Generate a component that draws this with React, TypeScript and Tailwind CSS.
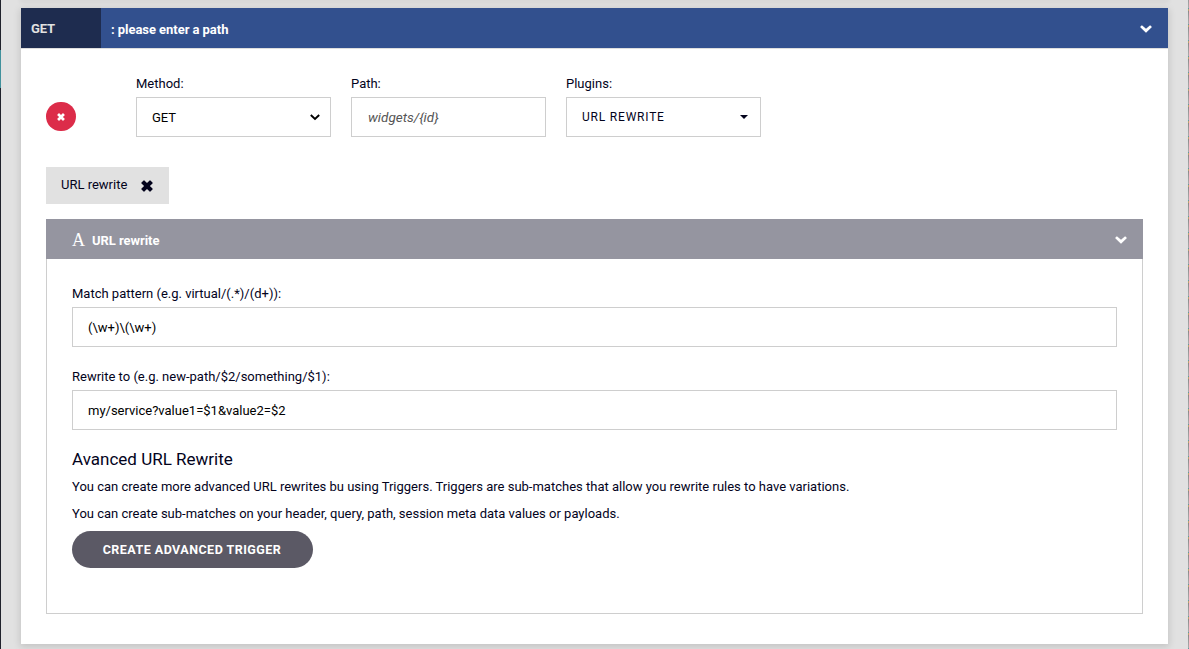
import type { ReactNode } from "react";

function Chevron({ className, width }: { className?: string; width: number }) {
  return (
    <svg className={className} width={width} height={(width * 8) / 12} viewBox="0 0 12 8" fill="currentColor" aria-hidden="true">
      <path d="M2.2 .4 6 3.8 9.8 .4Q10.1 .1 10.4 .4L11.7 1.7Q12 2 11.7 2.3L6.3 7.6Q6 7.9 5.7 7.6L.3 2.3Q0 2 .3 1.7L1.6 .4Q1.9 .1 2.2 .4Z" />
    </svg>
  );
}

function SelectArrow({ className }: { className?: string }) {
  return (
    <svg className={className} width="10" height="7" viewBox="0 0 10 7" fill="none" stroke="currentColor" strokeWidth="1.9" aria-hidden="true">
      <path d="M.8 1 5 5 9.2 1" />
    </svg>
  );
}

function Cross({ className, size }: { className?: string; size: number }) {
  return (
    <svg className={className} width={size} height={size} viewBox="0 0 12 12" fill="currentColor" aria-hidden="true">
      <path d="M3.4 .5 6 3.1 8.6 .5Q9 .1 9.4 .5L11.5 2.6Q11.9 3 11.5 3.4L8.9 6 11.5 8.6Q11.9 9 11.5 9.4L9.4 11.5Q9 11.9 8.6 11.5L6 8.9 3.4 11.5Q3 11.9 2.6 11.5L.5 9.4Q.1 9 .5 8.6L3.1 6 .5 3.4Q.1 3 .5 2.6L2.6 .5Q3 .1 3.4 .5Z" />
    </svg>
  );
}

function Field({ label, children }: { label: string; children: ReactNode }) {
  return (
    <div className="flex w-[195px] flex-col">
      <div className="h-[22px] leading-[18px]">{label}</div>
      <div className="flex h-10 items-center justify-between border border-[#cecece] px-[15px]">{children}</div>
    </div>
  );
}

function WideField({ label, value }: { label: string; value: string }) {
  return (
    <div>
      <div className="h-[23px] leading-[20px]">{label}</div>
      <div className="flex h-10 items-center border border-[#cecece] px-[15px] pt-[2px] text-black">{value}</div>
    </div>
  );
}

export default function App() {
  return (
    <div className="flex h-[649px] w-[1189px] overflow-hidden bg-[#e1e1e1] font-['Roboto','Liberation_Sans',sans-serif] text-[13px] text-[#03031c]">
      <div className="flex w-px flex-col bg-[#20222c]">
        <div className="mt-[50px] h-[38px] bg-[#41919c]" />
      </div>
      <div className="flex flex-1 flex-col px-5">
        <div className="h-0 shadow-[0_0_5px_1px_rgba(0,0,0,0.14)]" />
        <main className="mt-2 flex h-[636px] flex-col bg-white shadow-[0_2px_7px_1px_rgba(0,0,0,0.13)]">
          <header className="flex h-10 shrink-0 items-stretch bg-[#32508e] font-bold text-white">
            <div className="w-20 bg-[#1e2c4f] pl-[10px] leading-[42px] tracking-[-0.1px] text-[#e1e1e1]">GET</div>
            <div className="flex-1 pt-px pl-[10px] leading-[42px] tracking-[-0.05px]">: please enter a path</div>
            <Chevron width={12} className="mt-px mr-4 self-center" />
          </header>
          <div className="flex flex-1 flex-col border-t border-[#dedede] px-[25px]">
            <div className="mt-[26px] flex">
              <button className="mt-[27px] mr-[60px] flex h-[29px] w-[30px] items-center justify-center rounded-full bg-[#dc2c49] text-white" aria-label="Remove">
                <Cross size={8} className="mt-px" />
              </button>
              <div className="flex gap-5">
                <Field label="Method:">
                  <span className="pt-[2px] text-black">GET</span>
                  <SelectArrow className="-mr-[5px] text-black" />
                </Field>
                <Field label="Path:">
                  <span className="pl-px text-[13.5px] text-[#555] italic">widgets/{"{id}"}</span>
                </Field>
                <Field label="Plugins:">
                  <span className="text-[12px] tracking-[0.8px]">URL REWRITE</span>
                  <span className="-mr-[3px] border-x-4 border-t-4 border-x-transparent border-t-[#03031c]" />
                </Field>
              </div>
            </div>
            <div className="mt-[30px] flex h-[37px] w-[123px] items-center justify-between bg-[#e1e1e1] pr-4 pl-[15px]">
              <span className="-mt-[2px]">URL rewrite</span>
              <Cross size={12} />
            </div>
            <section className="mt-[15px]">
              <div className="flex h-10 items-center bg-[#9595a0] pr-4 pl-[26px] font-bold text-white">
                <span className="mt-[2px] w-5 font-['Liberation_Serif',serif] text-[18px] font-normal">A</span>
                <span className="mt-[3px] flex-1 tracking-[-0.05px]">URL rewrite</span>
                <Chevron width={12} className="mt-px" />
              </div>
              <div className="h-[355px] border border-t-0 border-[#cecece] px-[25px] pt-[25px]">
                <WideField label="Match pattern (e.g. virtual/(.*)/(d+)):" value="(\w+)\(\w+)" />
                <div className="h-5" />
                <WideField label="Rewrite to (e.g. new-path/$2/something/$1):" value="my/service?value1=$1&value2=$2" />
                <h2 className="mt-[19px] text-[17px] leading-5">Avanced URL Rewrite</h2>
                <p className="mt-2 leading-5">You can create more advanced URL rewrites bu using Triggers. Triggers are sub-matches that allow you rewrite rules to have variations.</p>
                <p className="mt-[7px] leading-5">You can create sub-matches on your header, query, path, session meta data values or payloads.</p>
                <button className="mt-[7px] h-[37px] w-[241px] rounded-full bg-[#5b5965] pt-px pr-px text-[12.5px] font-bold tracking-[0.48px] text-white">CREATE ADVANCED TRIGGER</button>
              </div>
            </section>
          </div>
        </main>
      </div>
      <div className="w-px bg-[repeating-linear-gradient(to_bottom,#999_0px,#aaa_8px,#5c9ba2_8px,#5c9ba2_9px,#b9a46f_9px,#b9a46f_11px,#888_11px,#999_16px)]" />
    </div>
  );
}
